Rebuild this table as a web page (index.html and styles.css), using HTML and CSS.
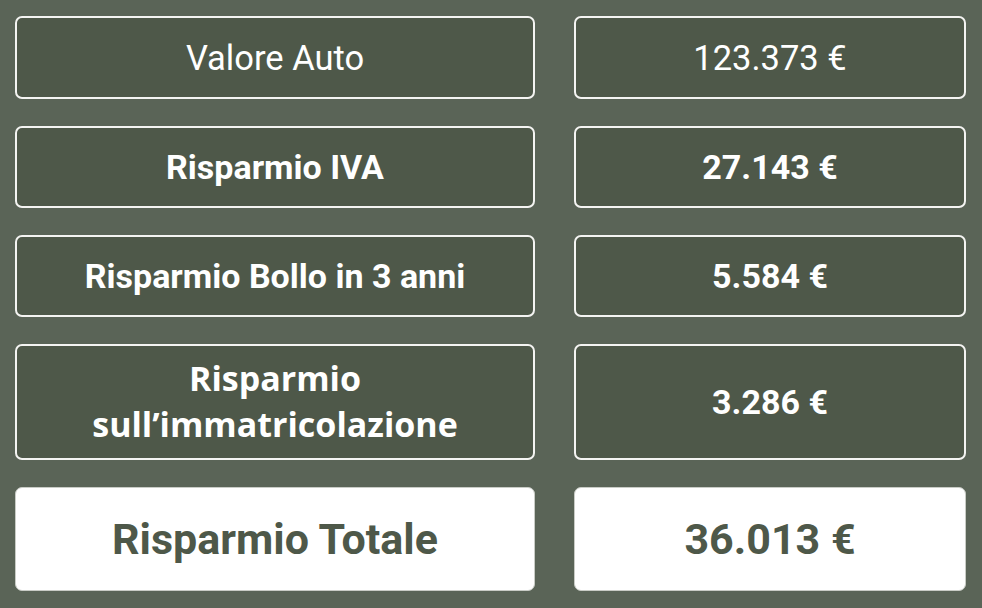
FILE: index.html
```html
<!DOCTYPE html>
<html lang="it">
<head>
    <meta charset="UTF-8">
    <meta name="viewport" content="width=device-width, initial-scale=1.0">
    <title>Risparmio</title>
    <link rel="stylesheet" href="styles.css">
</head>
<body>
    <div class="summary">
        <div class="cell label light">Valore Auto</div>
        <div class="cell value light">123.373 €</div>

        <div class="cell label">Risparmio IVA</div>
        <div class="cell value">27.143 €</div>

        <div class="cell label">Risparmio Bollo in 3 anni</div>
        <div class="cell value">5.584 €</div>

        <div class="cell label wrap">Risparmio<br>sull’immatricolazione</div>
        <div class="cell value">3.286 €</div>

        <div class="cell label total">Risparmio Totale</div>
        <div class="cell value total">36.013 €</div>
    </div>
</body>
</html>
```

FILE: styles.css
```css
body {
    margin: 0;
    padding: 0;
    background-color: #5a6457;
    font-family: Roboto, "Liberation Sans", sans-serif;
    color: #fff;
}

.summary {
    display: grid;
    grid-template-columns: 520px 392px;
    grid-template-rows: 83px 82px 82px 116px 104px;
    column-gap: 39px;
    row-gap: 27px;
    padding: 16px 0 0 15px;
}

.cell {
    display: flex;
    align-items: center;
    justify-content: center;
    text-align: center;
    background-color: #4e5849;
    border: 2px solid #f4f4f2;
    border-radius: 7px;
    box-sizing: border-box;
    font-size: 34px;
    font-weight: 700;
}

.cell.light {
    font-weight: 400;
    font-size: 34.5px;
}

.cell.wrap {
    font-family: "Open Sans", sans-serif;
    line-height: 46px;
    padding-bottom: 2px;
}

.cell.total {
    background-color: #fff;
    border: 1px solid #c9ccc6;
    color: #4e5849;
    font-size: 43px;
}
```
